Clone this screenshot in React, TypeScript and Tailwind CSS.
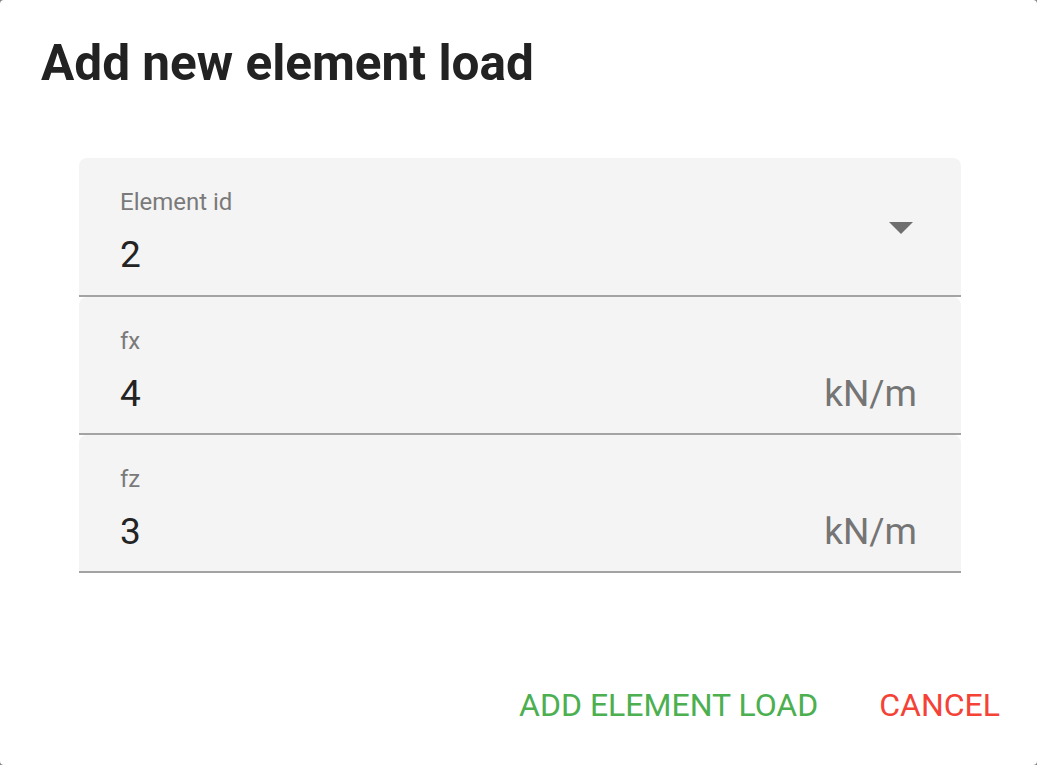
import { FC, ReactNode } from "react";

const font = { fontFamily: "Roboto, 'Liberation Sans', sans-serif" };

const Field: FC<{ label: string; value: string; unit?: string; select?: boolean }> = ({
	label,
	value,
	unit,
	select,
}) => {
	return (
		<div
			className={`flex items-start rounded-t-[8px] border-b-2 border-[#a3a3a3] bg-[#f4f4f4] pl-[41px] pr-[44px] ${
				select ? "h-[139px]" : "h-[138px]"
			}`}
		>
			<div className="flex flex-1 flex-col pt-[32px]">
				<span className="text-[24px] leading-none text-[#7a7a7a]">{label}</span>
				<div className="mt-[22px] flex items-baseline justify-between">
					<span className="text-[37px] leading-none text-[#232323]">{value}</span>
					{unit && <span className="text-[37px] leading-none text-[#757575]">{unit}</span>}
				</div>
			</div>
			{select && (
				<svg className="mt-[64px] mr-[4px]" width="24" height="12" viewBox="0 0 24 12">
					<path d="M0 0 L24 0 L12 12 Z" fill="#6f6f6f" />
				</svg>
			)}
		</div>
	);
};

const TextButton: FC<{ color: string; children: ReactNode }> = ({ color, children }) => (
	<button className={`text-[32px] leading-none uppercase ${color}`}>{children}</button>
);

export default function App() {
	return (
		<div className="h-[765px] w-[1037px] bg-[#7f7f7f]" style={font}>
			<div className="flex h-full w-full flex-col rounded-[4px] bg-white">
				<h1 className="pl-[41px] pt-[39px] text-[49.5px] font-bold leading-none text-[#222]">
					Add new element load
				</h1>

				<div className="mx-[79px] mt-[69px] flex w-[882px] flex-col">
					<Field label="Element id" value="2" select />
					<Field label="fx" value="4" unit="kN/m" />
					<Field label="fz" value="3" unit="kN/m" />
				</div>

				<div className="mt-auto mb-[44px] flex justify-end gap-[61px] pr-[37px]">
					<TextButton color="text-[#4caf50]">Add element load</TextButton>
					<TextButton color="text-[#f44336]">Cancel</TextButton>
				</div>
			</div>
		</div>
	);
}
